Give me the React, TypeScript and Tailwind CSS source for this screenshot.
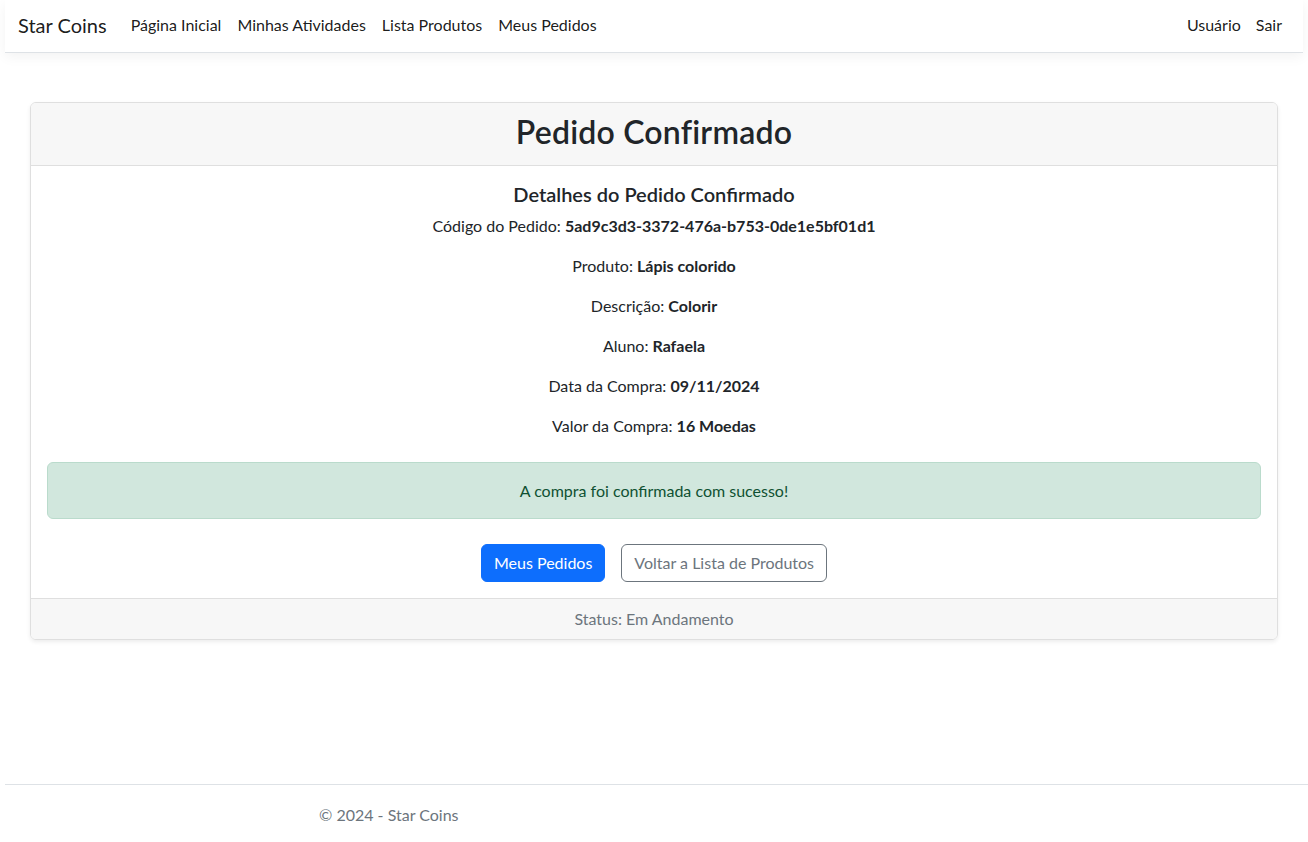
import React from "react";

export default function App() {
  const font = { fontFamily: "Lato, 'Noto Sans', sans-serif" };
  return (
    <div className="min-h-[842px] bg-white text-[#212529] flex flex-col" style={font}>
      <nav className="mx-[5px] h-[53px] pb-[2px] bg-white border-b border-[#dee2e6] shadow-[0_4px_12px_rgba(0,0,0,0.05)] flex items-center px-[13px]">
        <span className="text-[20px] mr-[24px] text-[rgba(0,0,0,0.9)]">Star Coins</span>
        <div className="flex items-center gap-[16px] text-[16px] text-[rgba(0,0,0,0.9)]">
          <span>Página Inicial</span>
          <span>Minhas Atividades</span>
          <span>Lista Produtos</span>
          <span>Meus Pedidos</span>
        </div>
        <div className="ml-auto flex items-center gap-[15px] text-[16px] text-[rgba(0,0,0,0.9)] pr-[8px]">
          <span>Usuário</span>
          <span>Sair</span>
        </div>
      </nav>

      <main className="px-[30px] pt-[49px] flex-1">
        <div className="border border-[#dfdfdf] rounded-[6px] shadow-[0_2px_4px_rgba(0,0,0,0.075)] overflow-hidden">
          <div className="bg-[#f7f7f7] border-b border-[#dfdfdf] h-[63px] pb-[3px] flex items-center justify-center">
            <h1 className="text-[32px] font-semibold leading-[1.2] tracking-[0.2px]">Pedido Confirmado</h1>
          </div>
          <div className="p-[16px] text-center text-[16px] leading-[24px]">
            <h4 className="text-[20px] font-semibold leading-[24px] mb-[8px]">Detalhes do Pedido Confirmado</h4>
            <p className="mb-[16px]">Código do Pedido: <b>5ad9c3d3-3372-476a-b753-0de1e5bf01d1</b></p>
            <p className="mb-[16px]">Produto: <b>Lápis colorido</b></p>
            <p className="mb-[16px]">Descrição: <b>Colorir</b></p>
            <p className="mb-[16px]">Aluno: <b>Rafaela</b></p>
            <p className="mb-[16px]">Data da Compra: <b>09/11/2024</b></p>
            <p className="mb-[24px]">Valor da Compra: <b>16 Moedas</b></p>
            <div className="bg-[#d1e7dd] border border-[#badbcc] text-[#0f5132] rounded-[6px] h-[57px] flex items-center justify-center">
              A compra foi confirmada com sucesso!
            </div>
            <div className="mt-[25px] flex justify-center gap-[16px]">
              <button className="h-[38px] px-[12px] rounded-[6px] bg-[#0d6efd] text-white border border-[#0d6efd]">Meus Pedidos</button>
              <button className="h-[38px] px-[12px] rounded-[6px] bg-white text-[#6c757d] border border-[#6c757d]">Voltar a Lista de Produtos</button>
            </div>
          </div>
          <div className="bg-[#f7f7f7] border-t border-[#dfdfdf] h-[41px] flex items-center justify-center text-[#6c757d] text-[16px]">
            Status: Em Andamento
          </div>
        </div>
      </main>

      <footer className="ml-[5px] mt-auto border-t border-[#dee2e6] h-[58px] leading-[60px] text-[#6c757d] text-[16px] pl-[314px]">
        © 2024 - Star Coins
      </footer>
    </div>
  );
}
